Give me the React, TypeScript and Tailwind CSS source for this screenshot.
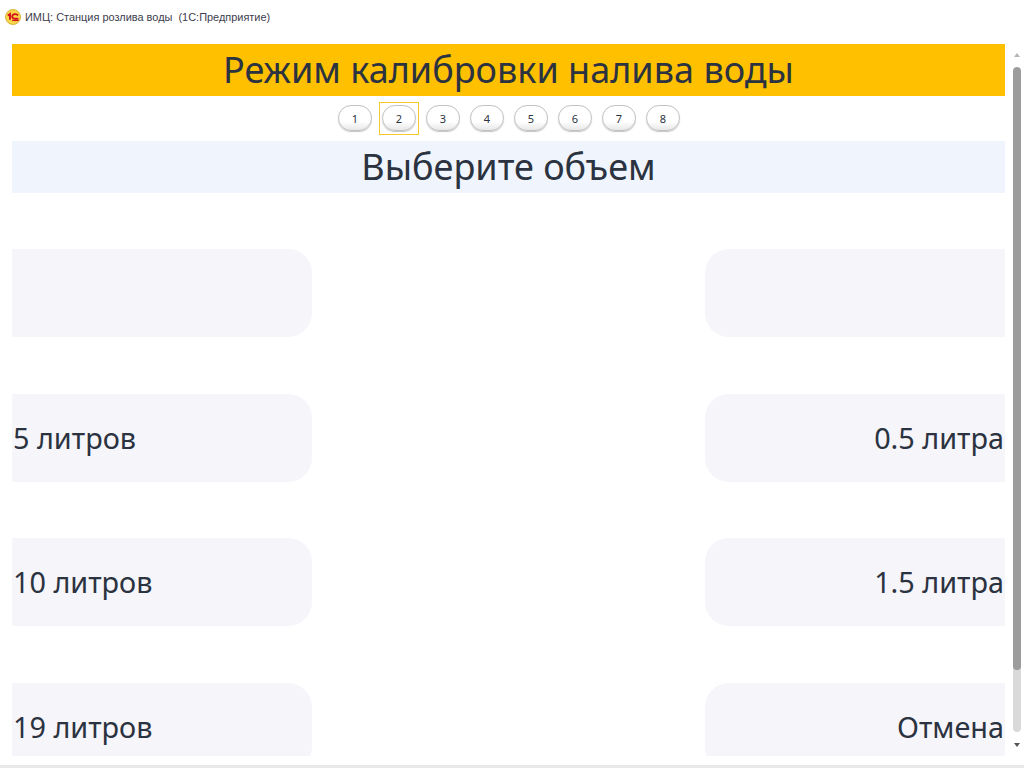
const STEPS = ['1', '2', '3', '4', '5', '6', '7', '8']
const LEFT = ['', '5 литров', '10 литров', '19 литров']
const RIGHT = ['', '0.5 литра', '1.5 литра', 'Отмена']

function Logo() {
  return (
    <svg width="16" height="16" viewBox="0 0 16 16" className="shrink-0">
      <circle cx="8" cy="8" r="7.5" fill="#f9d648" stroke="#d9b340" strokeWidth="1" />
      <path d="M2.8 6.6 L5 5 V10.8" fill="none" stroke="#d3121a" strokeWidth="1.9" />
      <path d="M13 6.4 C11.8 4.6 7.6 4.6 7.2 7.4 C7 9.8 10.5 10 13.4 9.6" fill="none" stroke="#d3121a" strokeWidth="1.8" />
      <path d="M7.2 11.4 H13.6" stroke="#d3121a" strokeWidth="1.3" />
    </svg>
  )
}

export default function App() {
  return (
    <div className="flex h-screen flex-col overflow-hidden bg-white text-[#2b3240] font-['Noto_Sans',sans-serif]">
      <header className="flex h-[44px] shrink-0 items-start gap-[4px] pl-[5px] pt-[9px] font-['Liberation_Sans',sans-serif] text-[10.95px] leading-[17px] text-[#3d3d4d]">
        <Logo />
        <span className="whitespace-pre">ИМЦ: Станция розлива воды  (1С:Предприятие)</span>
      </header>

      <div className="flex min-h-0 flex-1">
        <main className="ml-[12px] w-[993px] shrink-0 overflow-hidden">
          <h1 className="h-[52px] bg-[#ffc000] text-center text-[36px] leading-[52px]">
            Режим калибровки налива воды
          </h1>

          <nav className="mb-[1px] flex h-[44px] items-center justify-center gap-[10px] pl-[1px]">
            {STEPS.map((s) => (
              <div
                key={s}
                className={
                  s === '2'
                    ? 'mt-[1px] -mx-[2px] flex h-[31px] w-[38px] items-start justify-center pt-[2px] outline outline-1 outline-[#f5c92e]'
                    : 'flex h-[32px] w-[34px] items-center justify-center'
                }
              >
                <button className="h-[26px] w-[34px] rounded-[13px] border border-[#c2c2c2] bg-gradient-to-b from-white from-65% to-[#e8e8e8] text-[11px] leading-none text-[#2b3240] shadow-[0_1px_1px_#c4c4c4]">
                  {s}
                </button>
              </div>
            ))}
          </nav>

          <h2 className="h-[52px] bg-[#f0f4fc] text-center text-[36px] leading-[52px]">
            Выберите объем
          </h2>

          <div className="mt-[56px] flex justify-between">
            <div className="flex w-[300px] flex-col gap-[56.5px]">
              {LEFT.map((t, i) => (
                <div
                  key={i}
                  className="flex h-[88px] shrink-0 items-center rounded-r-[24px] bg-[#f5f5fa] pl-[1px] text-[28.8px]"
                >
                  {t}
                </div>
              ))}
            </div>
            <div className="flex w-[300px] flex-col gap-[56.5px]">
              {RIGHT.map((t, i) => (
                <div
                  key={i}
                  className="flex h-[88px] shrink-0 items-center justify-end rounded-l-[24px] bg-[#f5f5fa] pr-[1px] text-[28.8px]"
                >
                  {t}
                </div>
              ))}
            </div>
          </div>
        </main>

        <aside className="ml-[8px] flex w-[8px] shrink-0 flex-col items-center">
          <div className="mt-[9px] h-0 w-0 border-x-[3px] border-b-[4px] border-x-transparent border-b-[#b5b5b5]" />
          <div className="mt-[10px] flex h-[665px] w-[8px] flex-col overflow-hidden rounded-[4px] bg-[#d9d9d9]">
            <div className="h-[603px] rounded-[4px] bg-[#9c9c9c]" />
          </div>
          <div className="mt-[11px] h-0 w-0 border-x-[3px] border-t-[4px] border-x-transparent border-t-[#555]" />
        </aside>
      </div>

      <div className="mt-[9px] h-[3px] shrink-0 bg-[#e8e8e8]" />
    </div>
  )
}
